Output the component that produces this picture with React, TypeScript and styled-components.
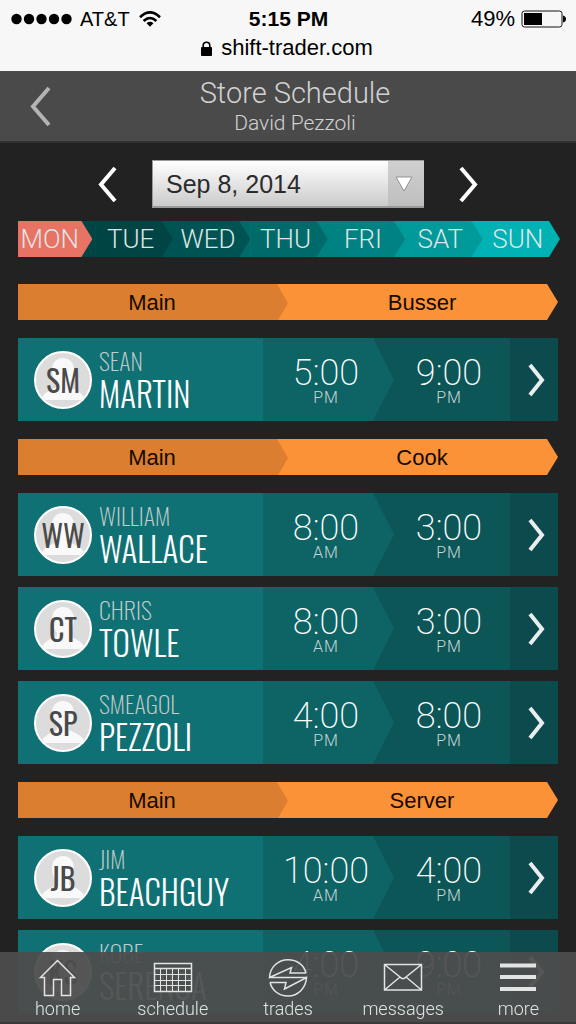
import React from 'react';
import styled, { createGlobalStyle } from 'styled-components';

const light = 'Roboto, "Liberation Sans", sans-serif';
const plain = '"Liberation Sans", Arial, sans-serif';
const condensed = 'Oswald, "Roboto Condensed", sans-serif';

const GlobalStyle = createGlobalStyle`
  * { box-sizing: border-box; }
  body { margin: 0; background: #222; }
  button, select { border: 0; border-radius: 0; padding: 0; margin: 0; background: none; font: inherit; color: inherit; cursor: pointer; }
  a { color: inherit; text-decoration: none; }
`;

const Page = styled.div`
  min-height: 100vh;
  background: #222;
  font-family: ${plain};
`;

const StatusBar = styled.div`
  background: #f7f7f7;
  color: #000;
  height: 71px;
  padding: 6px 10px 0 11px;
`;

const StatusRow = styled.div`
  display: grid;
  grid-template-columns: 1fr auto 1fr;
  align-items: center;
  height: 26px;
  font-size: 22px;
  line-height: 26px;
`;

const Carrier = styled.div`
  display: flex;
  align-items: center;
  gap: 8px;
  font-size: 20px;
`;

const Clock = styled.strong`
  font-size: 21px;
`;

const Battery = styled.div`
  display: flex;
  align-items: center;
  justify-content: flex-end;
  gap: 6px;
`;

const Address = styled.div`
  display: flex;
  align-items: center;
  justify-content: center;
  gap: 9px;
  height: 32px;
  padding-right: 3px;
  font-size: 22px;
  line-height: 32px;
`;

const Header = styled.header`
  display: grid;
  grid-template-columns: 80px 1fr 66px;
  align-items: center;
  height: 72px;
  background: #4a4a4a;
  border-bottom: 2px solid #333;
  color: #d2d2d2;
  font-family: ${light};
  font-weight: 300;
  text-align: center;
`;

const IconButton = styled.button`
  display: flex;
  align-items: center;
  justify-content: center;
`;

const Title = styled.h1`
  margin: 0;
  font-size: 29px;
  font-weight: 300;
  line-height: 34px;
`;

const Subtitle = styled.div`
  font-size: 21px;
  line-height: 26px;
`;

const Main = styled.main`
  padding: 17px 18px 11px;
`;

const DatePicker = styled.div`
  display: flex;
  align-items: center;
  justify-content: center;
  gap: 35px;
  height: 48px;
`;

const SelectBox = styled.label`
  position: relative;
  display: flex;
  width: 272px;
  height: 48px;
  border: 1px solid #999;
  border-width: 1px 0 2px 1px;
  background: linear-gradient(#fff, #cbcbcb);
`;

const Select = styled.select`
  appearance: none;
  flex: 1;
  padding-left: 13px;
  color: #2b2b2b;
  font-family: ${plain};
  font-size: 25px;
`;

const SelectArrow = styled.span`
  position: absolute;
  top: 0;
  right: 0;
  display: flex;
  align-items: center;
  justify-content: center;
  width: 36px;
  height: 100%;
  background: linear-gradient(#d0d0d0, #bebebe);
  pointer-events: none;
  padding-right: 4px;
`;

const Week = styled.nav`
  display: grid;
  grid-template-columns: repeat(7, 1fr);
  height: 36px;
  margin: 13px -2px 27px 0;
`;

const Day = styled.button<{ $next: string }>`
  background: ${p => p.$next};
  height: 36px;
`;

const DayShape = styled.span<{ $color: string; $active?: boolean }>`
  display: block;
  height: 36px;
  margin-right: ${p => (p.$active ? 3 : 0)}px;
  padding-right: ${p => (p.$active ? 11 : 7)}px;
  background: ${p => p.$color};
  clip-path: polygon(0 0, calc(100% - 11px) 0, 100% 50%, calc(100% - 11px) 100%, 0 100%);
  color: #dfe5e5;
  font-family: ${light};
  font-size: 26px;
  font-weight: 300;
  line-height: 37px;
  text-align: center;
`;

const Group = styled.section`
  display: flex;
  flex-direction: column;
  gap: 11px;
  margin-bottom: 18px;
`;

const GroupHeader = styled.h2`
  display: grid;
  grid-template-columns: 1fr 1fr;
  height: 36px;
  margin: 0 0 7px;
  background: #fc9238;
  clip-path: polygon(0 0, calc(100% - 11px) 0, 100% 50%, calc(100% - 11px) 100%, 0 100%);
  color: #140a02;
  font-size: 22px;
  font-weight: 400;
  line-height: 38px;
  text-align: center;
`;

const Area = styled.span`
  padding-right: 2px;
  background: #db7e2f;
  clip-path: polygon(0 0, calc(100% - 11px) 0, 100% 50%, calc(100% - 11px) 100%, 0 100%);
`;

const Role = styled.span`
  padding-right: 2px;
`;

const ShiftRow = styled.a`
  display: grid;
  grid-template-columns: 1fr 131px 116px 48px;
  height: 83px;
  color: #fff;
  background: #0c5658;
`;

const Person = styled.div`
  display: flex;
  align-items: center;
  gap: 7px;
  padding-left: 16px;
  background: #107174;
  font-family: ${condensed};
`;

const Avatar = styled.div`
  display: grid;
  place-items: center;
  width: 58px;
  height: 58px;
  border: 2px solid #fff;
  border-radius: 50%;
  overflow: hidden;
  background: #dcdcdc;

  > * { grid-area: 1 / 1; }
`;

const Initials = styled.span`
  color: #4a4a4a;
  font-size: 30px;
  font-weight: 400;
  line-height: 50px;
`;

const Name = styled.div`
  display: flex;
  flex-direction: column;
  padding-bottom: 5px;
  white-space: nowrap;
`;

const First = styled.span`
  color: #c3cccc;
  font-size: 24px;
  font-weight: 200;
  line-height: 34px;
`;

const Last = styled.span`
  font-size: 33px;
  font-weight: 300;
  line-height: 34px;
`;

const Time = styled.div<{ $start?: boolean }>`
  display: flex;
  flex-direction: column;
  align-items: center;
  padding: 16px ${p => (p.$start ? 5 : 6)}px 0 0;
  background: ${p => (p.$start ? '#0e6365' : '#0c5658')};
  clip-path: ${p => (p.$start ? 'polygon(0 0, calc(100% - 21px) 0, 100% 50%, calc(100% - 21px) 100%, 0 100%)' : 'none')};
  font-family: ${light};
`;

const Hour = styled.span`
  font-size: 36px;
  font-weight: 200;
  line-height: 39px;
`;

const Meridiem = styled.span`
  color: #c6d6d6;
  font-size: 16px;
  font-weight: 300;
  letter-spacing: 1px;
  line-height: 10px;
`;

const Open = styled.div`
  display: flex;
  align-items: center;
  justify-content: center;
  padding-left: 5px;
  background: #0c4b4d;
`;

const TabBar = styled.nav`
  position: fixed;
  right: 0;
  bottom: 0;
  left: 0;
  display: grid;
  grid-template-columns: repeat(5, 1fr);
  height: 72px;
  border-bottom: 2px solid #3a3a3a;
  background: rgba(77, 77, 77, 0.94);
`;

const Tab = styled.a`
  display: flex;
  flex-direction: column;
  align-items: center;
  padding-top: 7px;
  color: #e2e4e4;
  font-family: ${light};
  font-size: 18px;
  font-weight: 300;
  line-height: 24px;
`;

const Chevron = ({ back, color = '#fff', width = 19, height = 37 }: { back?: boolean; color?: string; width?: number; height?: number }) => (
  <svg width={width} height={height} viewBox={`0 0 ${width} ${height}`} fill="none" stroke={color} strokeWidth="4" aria-hidden="true">
    <path d={back
      ? `M${width - 2} 2L3 ${height / 2}L${width - 2} ${height - 2}`
      : `M2 2L${width - 3} ${height / 2}L2 ${height - 2}`} />
  </svg>
);

const Silhouette = () => (
  <svg width="54" height="54" viewBox="0 0 54 54" fill="#f9f9f9" aria-hidden="true">
    <path d="M27 5c-7 0-11 5-11 12 0 6 2 10 5 14v3c-6 3-14 5-16 13h44c-2-8-10-10-16-13v-3c3-4 5-8 5-14 0-7-4-12-11-12z" />
  </svg>
);

const tabIcons: Record<string, React.ReactNode> = {
  home: <path d="M2.500 18.500L19.500 1.500L36.500 18.500H32.500V36.500H23.500V20.500H15.500V36.500H6.500V18.500Z" />,
  schedule: (
    <>
      <path d="M1.500 4.500H38.500V32.500H1.500ZM1.500 9.500H38.500" />
      <path strokeWidth="1" d="M7.500 9.500V32.500M13.500 9.500V32.500M19.500 9.500V32.500M25.500 9.500V32.500M32.500 9.500V32.500M1.500 15.500H38.500M1.500 21.500H38.500M1.500 26.500H38.500" />
    </>
  ),
  trades: (
    <>
      <path d="M38 14C36 6 29 .8 20 .8C10 .8 2 8 1.500 18.500L23.500 8.500L22 14H38M1.500 18.500H38.500" />
      <path d="M2 23.500C4 31.500 11 37 20 37C30 37 38 29 38.500 18.500L16.500 30L18 23.500H2" />
    </>
  ),
  messages: <path d="M1.500 5.500H38.500V31H1.500ZM1.500 5.500L17 18Q20 21.500 23 18L38.500 5.500M1.500 31L17 18M38.500 31L23 18" />,
  more: <path strokeWidth="4" d="M2 6.500H38M2 18H38M2 30H38" />,
};

const days = [
  ['MON', '#e87263'], ['TUE', '#004544'], ['WED', '#005353'], ['THU', '#006a6a'],
  ['FRI', '#008182'], ['SAT', '#009a9b'], ['SUN', '#00b2b4'],
];

const groups = [
  { area: 'Main', role: 'Busser', shifts: [['SEAN', 'MARTIN', '5:00 PM', '9:00 PM']] },
  {
    area: 'Main', role: 'Cook', shifts: [
      ['WILLIAM', 'WALLACE', '8:00 AM', '3:00 PM'],
      ['CHRIS', 'TOWLE', '8:00 AM', '3:00 PM'],
      ['SMEAGOL', 'PEZZOLI', '4:00 PM', '8:00 PM'],
    ],
  },
  {
    area: 'Main', role: 'Server', shifts: [
      ['JIM', 'BEACHGUY', '10:00 AM', '4:00 PM'],
      ['KOBE', 'SERENCA', '4:00 PM', '9:00 PM'],
    ],
  },
];

const TimeCell = ({ value, start }: { value: string; start?: boolean }) => {
  const [hour, meridiem] = value.split(' ');
  return (
    <Time $start={start}>
      <Hour>{hour}</Hour>
      <Meridiem>{meridiem}</Meridiem>
    </Time>
  );
};

export default function App() {
  return (
    <Page>
      <GlobalStyle />
      <StatusBar>
        <StatusRow>
          <Carrier>
            <svg width="61" height="12" viewBox="0 0 61 12" aria-hidden="true">
              {[5.5, 18, 30.5, 43, 55.5].map(x => <circle key={x} cx={x} cy="6" r="5.200" />)}
            </svg>
            AT&amp;T
            <svg width="24" height="18" viewBox="0 0 24 18" fill="none" stroke="#000" strokeWidth="2.600" aria-hidden="true">
              <path d="M2 7.200Q12-2.600 22 7.200M5.600 11Q12 5 18.400 11" />
              <path d="M8.500 13.200Q12 10.400 15.500 13.200L12 16.800Z" fill="#000" stroke="none" />
            </svg>
          </Carrier>
          <Clock>5:15 PM</Clock>
          <Battery>
            49%
            <svg width="45" height="18" viewBox="0 0 45 18" aria-hidden="true">
              <rect x="1" y="1" width="40" height="16" rx="2.500" fill="none" stroke="#111" />
              <rect x="3" y="3" width="18" height="12" />
              <path d="M42 5.500Q45 6.500 45 9T42 12.500Z" />
            </svg>
          </Battery>
        </StatusRow>
        <Address>
          <svg width="11" height="15" viewBox="0 0 11 15" aria-hidden="true">
            <rect y="6" width="11" height="9" rx="1" />
            <path d="M2.200 7V4.500a3.300 3.300 0 0 1 6.600 0V7" fill="none" stroke="#000" strokeWidth="1.600" />
          </svg>
          shift-trader.com
        </Address>
      </StatusBar>

      <Header>
        <IconButton aria-label="Back"><Chevron back color="#b4b4b4" width={21} height={41} /></IconButton>
        <div>
          <Title>Store Schedule</Title>
          <Subtitle>David Pezzoli</Subtitle>
        </div>
      </Header>

      <Main>
        <DatePicker>
          <IconButton aria-label="Previous day"><Chevron back /></IconButton>
          <SelectBox>
            <Select aria-label="Date" defaultValue="2014-09-08">
              <option value="2014-09-08">Sep 8, 2014</option>
            </Select>
            <SelectArrow>
              <svg width="18" height="16" viewBox="0 0 18 16" aria-hidden="true">
                <path d="M1 1H17L9 15Z" fill="#fff" stroke="#929292" />
              </svg>
            </SelectArrow>
          </SelectBox>
          <IconButton aria-label="Next day"><Chevron /></IconButton>
        </DatePicker>

        <Week aria-label="Days">
          {days.map(([label, color], i) => (
            <Day key={label} $next={days[i + 1]?.[1] ?? 'transparent'}>
              <DayShape $color={color} $active={i === 0}>{label}</DayShape>
            </Day>
          ))}
        </Week>

        {groups.map(group => (
          <Group key={group.role}>
            <GroupHeader>
              <Area>{group.area}</Area>
              <Role>{group.role}</Role>
            </GroupHeader>
            {group.shifts.map(([first, last, start, end]) => (
              <ShiftRow key={last} href="#">
                <Person>
                  <Avatar>
                    <Silhouette />
                    <Initials>{first[0] + last[0]}</Initials>
                  </Avatar>
                  <Name>
                    <First>{first}</First>
                    <Last>{last}</Last>
                  </Name>
                </Person>
                <TimeCell value={start} start />
                <TimeCell value={end} />
                <Open><Chevron color="#e9eeee" width={17} height={34} /></Open>
              </ShiftRow>
            ))}
          </Group>
        ))}
      </Main>

      <TabBar>
        {Object.entries(tabIcons).map(([name, icon]) => (
          <Tab key={name} href="#">
            <svg width="40" height="38" viewBox="0 0 40 38" fill="none" stroke="currentColor" strokeWidth="1.500" aria-hidden="true">{icon}</svg>
            {name}
          </Tab>
        ))}
      </TabBar>
    </Page>
  );
}
